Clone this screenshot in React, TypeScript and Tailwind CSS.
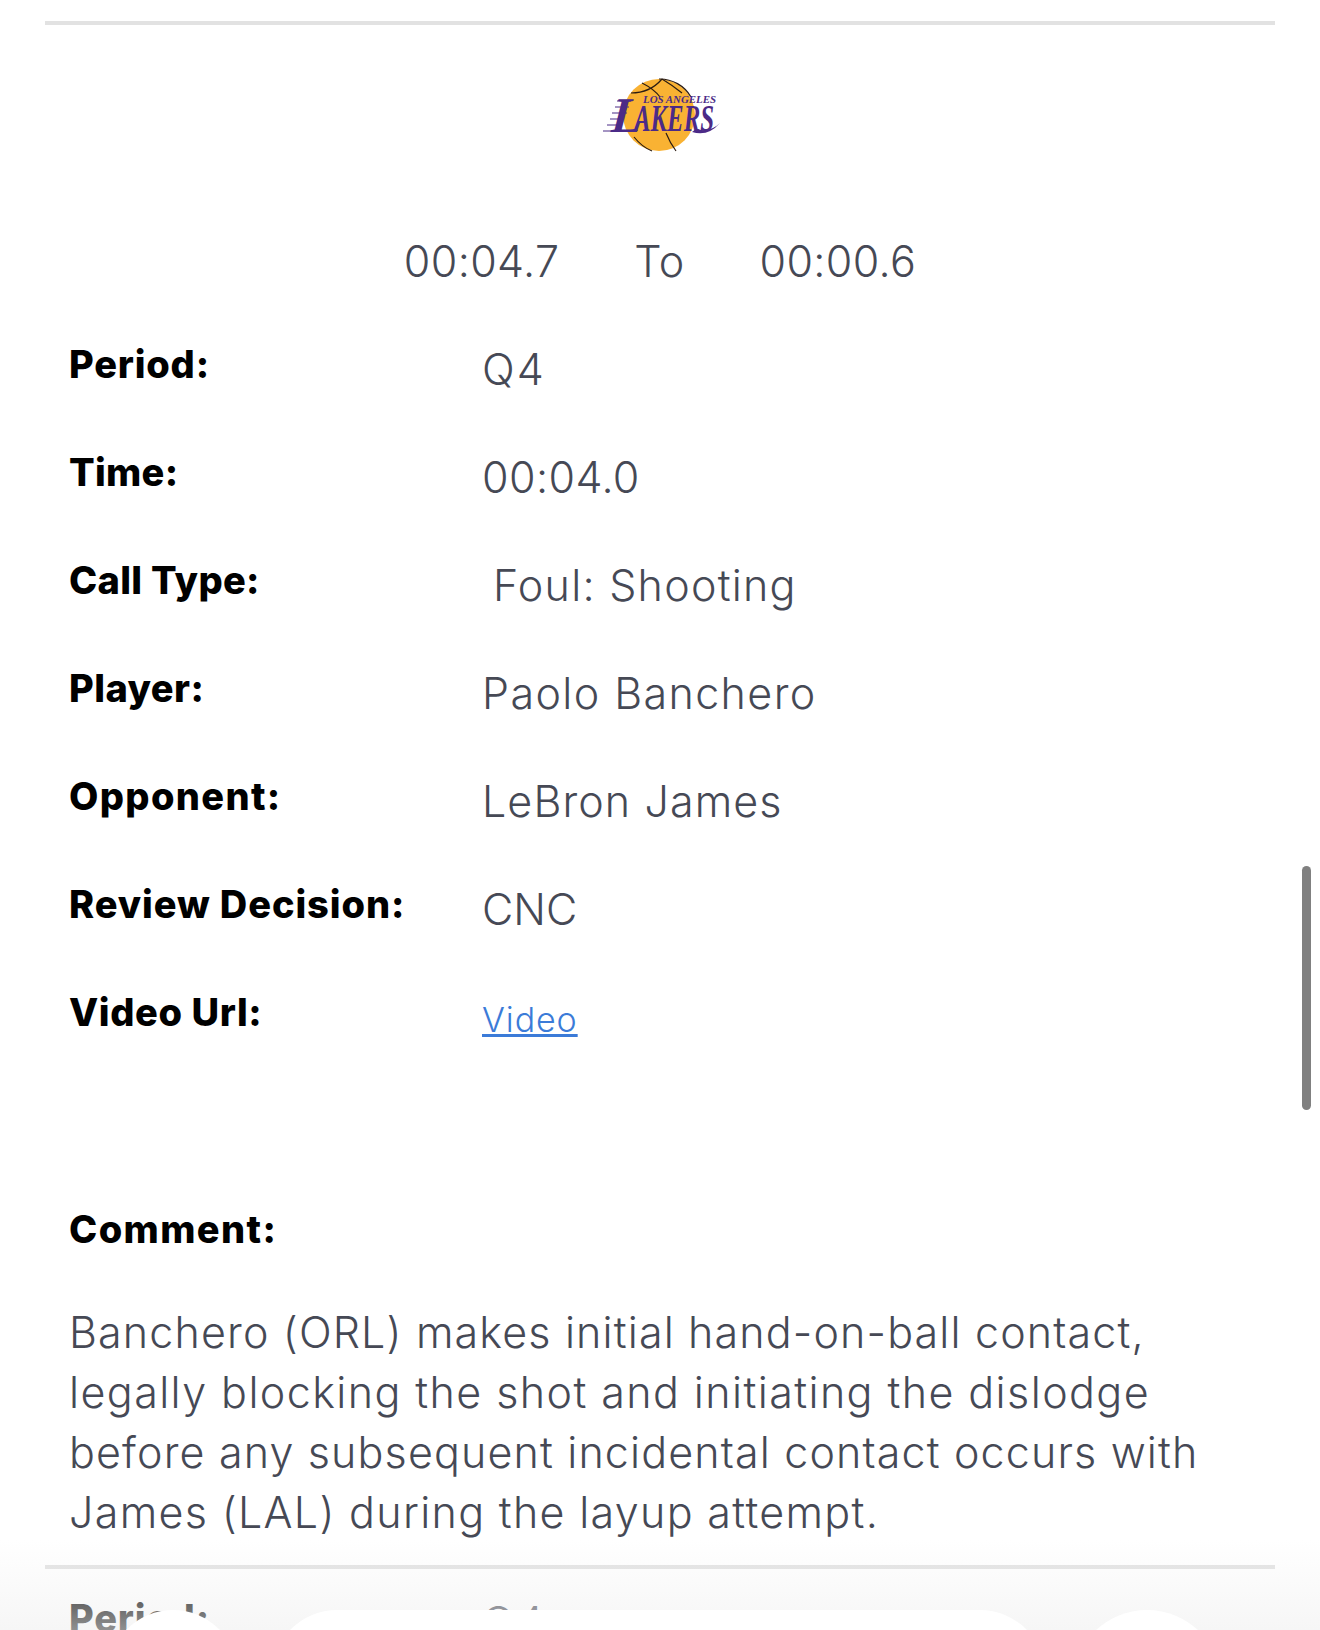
const rows = [
  { label: "Period:", labelSpacing: "tracking-[0.8px]", value: "Q4", spacing: "tracking-[2px]" },
  { label: "Time:", labelSpacing: "tracking-[0.3px]", value: "00:04.0", spacing: "tracking-[0.4px]" },
  { label: "Call Type:", labelSpacing: "tracking-[0.3px]", value: "Foul: Shooting", spacing: "ml-[11px] tracking-[1.25px]" },
  { label: "Player:", labelSpacing: "tracking-[0.45px]", value: "Paolo Banchero", spacing: "tracking-[1.4px]" },
  { label: "Opponent:", labelSpacing: "tracking-[1.35px]", value: "LeBron James", spacing: "tracking-[1.1px]" },
  { label: "Review Decision:", labelSpacing: "tracking-[0.9px]", value: "CNC", spacing: "tracking-[0px]" },
];

const LakersLogo = () => (
  <svg width="124" height="80" viewBox="0 0 124 80" className="overflow-visible">
    <circle cx="61" cy="41" r="36" fill="#f9b233" />
    <path d="M61 5 A36 36 0 0 1 93 23" fill="none" stroke="#2b1c12" strokeWidth="1.2" />
    <path d="M33 19 Q52 19 64 5 M44 9 Q56 15 62 23 M64 5 Q74 11 84 19 M36 63 Q44 73 54 77 M68 59 Q72 69 78 77" fill="none" stroke="#2b1c12" strokeWidth="1.2" />
    <text x="45" y="29" fontFamily="Liberation Serif" fontWeight="700" fontStyle="italic" fontSize="9.5" textLength="73" lengthAdjust="spacingAndGlyphs" fill="#4b2a87">LOS ANGELES</text>
    <g transform="translate(12 0) skewX(-14)">
      <text x="14" y="58" fontFamily="Liberation Serif" fontWeight="700" fontSize="50" textLength="30" lengthAdjust="spacingAndGlyphs" fill="#4b2a87">L</text>
    </g>
    <text x="36" y="57" fontFamily="Liberation Serif" fontWeight="700" fontStyle="italic" fontSize="38" textLength="80" lengthAdjust="spacingAndGlyphs" fill="#4b2a87">AKERS</text>
    <path d="M5 57 H20 M9 51 H23 M12 45 H26 M14 39 H29 M17 33 H31 M19 27 H33" stroke="#4b2a87" strokeWidth="1" />
    <path d="M94 58 Q110 63 122 49 Q112 59 98 55" fill="#4b2a87" />
  </svg>
);

const App = () => {
  return (
    <div className="relative h-[1630px] overflow-hidden bg-white font-['Inter',sans-serif] text-[#464955]">
      <div className="mx-[45px] pt-[21px]">
        <div className="h-1 bg-[#e2e2e2]" />
        <div className="mt-[49px] flex justify-center">
          <LakersLogo />
        </div>
        <div className="mt-[82px] flex justify-center gap-[75px] text-[43px] font-light leading-[50px] tracking-[0.35px]">
          <span>00:04.7</span>
          <span>To</span>
          <span>00:00.6</span>
        </div>
        <div className="mt-[55px] px-[24px]">
          {rows.map((row) => (
            <div key={row.label} className="flex h-[108px] items-start">
              <div className={`w-[413px] text-[38px] font-extrabold leading-[46px] text-black ${row.labelSpacing}`}>{row.label}</div>
              <div className={`mt-[3px] text-[43px] font-light leading-[50px] ${row.spacing}`}>{row.value}</div>
            </div>
          ))}
          <div className="flex items-start">
            <div className="w-[413px] text-[38px] font-extrabold leading-[46px] tracking-[0.6px] text-black">Video Url:</div>
            <a href="#" className="mt-[9px] text-[34px] font-light leading-[44px] tracking-[0.9px] text-[#3b7bd8] underline">Video</a>
          </div>
          <div className="mt-[164px] text-[38px] font-extrabold leading-[46px] tracking-[1.4px] text-black">Comment:</div>
          <p className="mt-[50px] text-[43px] font-light leading-[60px] tracking-[1.15px]">
            Banchero (ORL) makes initial hand-on-ball contact,
            <br />
            <span className="tracking-[1.42px]">legally blocking the shot and initiating the dislodge</span>
            <br />
            before any subsequent incidental contact occurs with
            <br />
            <span className="tracking-[1.32px]">James (LAL) during the layup attempt.</span>
          </p>
        </div>
        <div className="mt-[23px] h-1 bg-[#e2e2e2]" />
        <div className="mt-[26px] flex px-[24px]">
          <div className="w-[413px] text-[38px] font-extrabold leading-[46px] tracking-[0.8px] text-black">Period:</div>
          <div className="mt-[2px] text-[43px] font-light leading-[50px] tracking-[2px]">Q4</div>
        </div>
      </div>
      {/* scrollbar */}
      <div className="absolute left-[1302px] top-[866px] h-[244px] w-[9px] rounded-full bg-[#808080]" />
      {/* tab bar blur */}
      <div className="absolute inset-x-0 bottom-0 h-[90px] bg-gradient-to-b from-white/0 to-[#f0f0f0]/60" />
      <div className="absolute bottom-[-110px] left-[108px] h-[130px] w-[130px] rounded-full bg-white" />
      <div className="absolute bottom-[-110px] left-[272px] h-[130px] w-[773px] rounded-[65px] bg-white" />
      <div className="absolute bottom-[-130px] left-[1072px] h-[150px] w-[150px] rounded-full bg-white" />
    </div>
  );
};

export default App;
